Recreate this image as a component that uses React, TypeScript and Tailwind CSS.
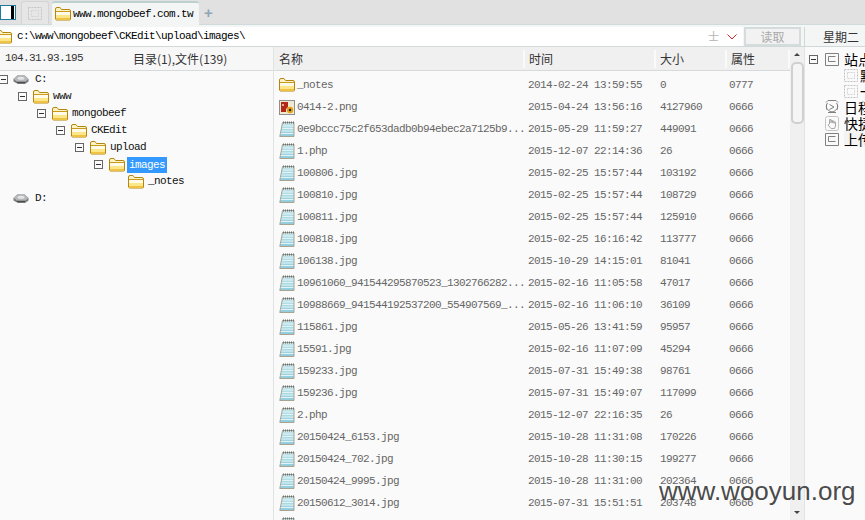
import React from 'react';

const mono = 'font-["Liberation_Mono","Noto_Sans_CJK_SC",monospace] text-[11px] tracking-[-0.6px]';
const cjk = 'font-["Noto_Sans_CJK_SC",sans-serif]';

const FolderIcon: React.FC<{ className?: string }> = ({ className }) => (
  <svg width="16" height="14" viewBox="0 0 16 14" className={`shrink-0 ${className ?? ''}`}>
    <path d="M0.500 12V2a1.500 1.500 0 0 1 1.500-1.500h3l1.500 2h7.500a1.500 1.500 0 0 1 1.500 1.500v8a1 1 0 0 1-1 1h-13a1.500 1.500 0 0 1-1-1.500z" fill="#fdf3c4" stroke="#b5860f" />
    <path d="M1 4.500h14v-0.500" fill="none" stroke="#c99a1e" />
    <path d="M1 5h14v3H1z" fill="#fffbe6" />
    <path d="M1 8h14v3H1z" fill="#fbe689" />
    <path d="M1 11h14v2H1z" fill="#eec345" />
  </svg>
);

const DriveIcon = () => (
  <svg width="16" height="11" viewBox="0 0 16 11" className="shrink-0">
    <path d="M0.500 5 5 1h6l4.500 4v2.500L12 10H5L0.500 7.500z" fill="#77797b" />
    <path d="M0.500 5 5 1h6l4.500 4-3 2.500H4z" fill="#b5b7b9" />
    <ellipse cx="8" cy="4.200" rx="3.500" ry="1.500" fill="#e4e5e6" />
    <path d="M4 8.500h8" stroke="#4a4b4d" />
  </svg>
);

const FileIcon = () => (
  <svg width="16" height="16" viewBox="0 0 16 16" className="shrink-0">
    <defs>
      <linearGradient id="pad" x1="0" y1="0" x2="0" y2="1">
        <stop offset="0" stopColor="#c6e6ec" />
        <stop offset="1" stopColor="#8fcbdc" />
      </linearGradient>
    </defs>
    <path d="M3.500 1.500h11.500v14H0.800z" fill="url(#pad)" stroke="#a8a392" />
    <path d="M3.800 5h10.500M3.200 7.500h11M2.500 10h11.800M1.800 12.500h12.500" stroke="#e2f3f6" />
    <path d="M4.500 0.500v2M6.500 0.500v2M8.500 0.500v2M10.500 0.500v2M12.500 0.500v2M14.500 0.500v2" stroke="#6f6f6f" />
  </svg>
);

const ImageIcon = () => (
  <svg width="16" height="15" viewBox="0 0 16 15" className="shrink-0">
    <rect x="0.500" y="0.500" width="15" height="14" fill="#efe9d2" stroke="#8f8f8f" />
    <path d="M2 2h7v5l-2 2v3H2z" fill="#b3261a" />
    <path d="M3 4h2v2H3z" fill="#e6b090" />
    <circle cx="11" cy="10" r="3.200" fill="#e8a010" />
    <circle cx="11" cy="10" r="1.200" fill="#222" />
  </svg>
);

const Toggle: React.FC<{ className?: string }> = ({ className }) => (
  <span className={`w-[9px] h-[9px] border border-[#666] flex items-center justify-center shrink-0 ${className ?? ''}`}>
    <span className="w-[5px] h-px bg-[#333]" />
  </span>
);

const SiteIcon = () => (
  <svg width="14" height="13" viewBox="0 0 14 13" className="shrink-0">
    <path d="M0.500 0.500h13v12h-13z" fill="none" stroke="#808080" />
    <path d="M10.500 3.500h-7v5h7" fill="none" stroke="#808080" />
  </svg>
);

const DashedIcon = () => (
  <svg width="14" height="13" viewBox="0 0 14 13" className="shrink-0">
    <path d="M0.500 0.500h13v12h-13z" fill="none" stroke="#c4c4c4" strokeDasharray="2 1" />
    <path d="M3.500 3.500h7v6h-7z" fill="none" stroke="#d4d4d4" strokeDasharray="2 1" />
  </svg>
);

const ClockIcon = () => (
  <svg width="14" height="14" viewBox="0 0 14 14" className="shrink-0">
    <path d="M1 2.500 3 0.500h8l2 2M2.500 3a5.500 5.500 0 1 0 9 0" fill="none" stroke="#808080" />
    <path d="M1.500 4.500v5M12.500 4.500v5M3 12.500h8" fill="none" stroke="#808080" />
    <path d="M4.500 4.500 9 7l-4.500 2.500" fill="none" stroke="#808080" />
  </svg>
);

const HandIcon = () => (
  <svg width="14" height="15" viewBox="0 0 14 15" className="shrink-0">
    <rect x="0.500" y="0.500" width="13" height="14" rx="2" fill="none" stroke="#c4c4c4" />
    <path d="M4.500 8V3.500h1.500V7M6 7V4.500h1.500V7M7.500 7V5h1.500v2.500M9 7.500V6h1.500v4L9.500 12.500H6L3 9l1.500-1" fill="none" stroke="#a8a8a8" />
  </svg>
);

const treeRows = [
  { label: 'www', pad: 'pl-[18px]', toggle: true },
  { label: 'mongobeef', pad: 'pl-[37px]', toggle: true },
  { label: 'CKEdit', pad: 'pl-[56px]', toggle: true },
  { label: 'upload', pad: 'pl-[75px]', toggle: true },
  { label: 'images', pad: 'pl-[94px]', toggle: true, active: true },
  { label: '_notes', pad: 'pl-[128px]', toggle: false },
];

const files = [
  ['_notes', '2014-02-24 13:59:55', '0', '0777', 'folder'],
  ['0414-2.png', '2015-04-24 13:56:16', '4127960', '0666', 'image'],
  ['0e9bccc75c2f653dadb0b94ebec2a7125b9...', '2015-05-29 11:59:27', '449091', '0666', 'file'],
  ['1.php', '2015-12-07 22:14:36', '26', '0666', 'file'],
  ['100806.jpg', '2015-02-25 15:57:44', '103192', '0666', 'file'],
  ['100810.jpg', '2015-02-25 15:57:44', '108729', '0666', 'file'],
  ['100811.jpg', '2015-02-25 15:57:44', '125910', '0666', 'file'],
  ['100818.jpg', '2015-02-25 16:16:42', '113777', '0666', 'file'],
  ['106138.jpg', '2015-10-29 14:15:01', '81041', '0666', 'file'],
  ['10961060_941544295870523_1302766282...', '2015-02-16 11:05:58', '47017', '0666', 'file'],
  ['10988669_941544192537200_554907569_...', '2015-02-16 11:06:10', '36109', '0666', 'file'],
  ['115861.jpg', '2015-05-26 13:41:59', '95957', '0666', 'file'],
  ['15591.jpg', '2015-02-16 11:07:09', '45294', '0666', 'file'],
  ['159233.jpg', '2015-07-31 15:49:38', '98761', '0666', 'file'],
  ['159236.jpg', '2015-07-31 15:49:07', '117099', '0666', 'file'],
  ['2.php', '2015-12-07 22:16:35', '26', '0666', 'file'],
  ['20150424_6153.jpg', '2015-10-28 11:31:08', '170226', '0666', 'file'],
  ['20150424_702.jpg', '2015-10-28 11:30:15', '199277', '0666', 'file'],
  ['20150424_9995.jpg', '2015-10-28 11:31:00', '202364', '0666', 'file'],
  ['20150612_3014.jpg', '2015-07-31 15:51:51', '203748', '0666', 'file'],
];

const App: React.FC = () => {
  return (
    <div className="relative w-[865px] h-[520px] overflow-hidden flex flex-col bg-[#fafafa]">
      {/* Tab strip */}
      <div className="h-[27px] shrink-0 bg-[#f4f6f6]">
        <div className="h-[25px] bg-[#e1e1e1] border-b border-[#cfdada] flex items-end">
          <div className="w-[16px] h-[15px] border border-[#1f7a9c] bg-black flex mr-[5px] self-center">
            <span className="w-[10px] h-full bg-white" />
            <span className="w-[3px] h-full bg-black" />
            <span className="w-px h-full bg-white" />
          </div>
          <div className="w-[28px] h-[23px] mr-[3px] bg-[#e6e6e6] border border-b-0 border-[#d4d4d4] rounded-t-[3px] flex items-center justify-center">
            <DashedIcon />
          </div>
          <div className="w-[147px] h-[24px] bg-[#f4f6f6] border-t-2 border-[#bcd0d0] rounded-t-[3px] flex items-center pl-[3px] gap-[2px] translate-y-px">
            <FolderIcon />
            <span className={`${mono} text-black`}>www.mongobeef.com.tw</span>
          </div>
          <span className="ml-[5px] self-center text-[#8ea6b4] text-[15px] font-bold leading-none font-['Liberation_Sans',sans-serif]">+</span>
        </div>
      </div>

      {/* Address bar */}
      <div className="h-[20px] shrink-0 flex items-center bg-[#f4f6f6] border-b border-[#d0d8d8]">
        <div className="w-[747px] h-[19px] bg-white flex items-center -ml-[4px] gap-[5px] shrink-0">
          <FolderIcon />
          <span className={`${mono} text-black flex-1`}>c:\www\mongobeef\CKEdit\upload\images\</span>
          <span className={`text-[#b5b5b5] text-[11px] leading-none ${cjk}`}>士</span>
          <svg width="10" height="6" viewBox="0 0 10 6" className="ml-[3px] mr-[6px]"><path d="M0.500 0.500 5 5l4.500-4.500" fill="none" stroke="#d22" /></svg>
        </div>
        <div className={`ml-[1px] w-[57px] h-[19px] border-2 border-[#d5dcdc] bg-[#f2f2f2] flex items-center justify-center text-[12px] text-[#a9a9a9] ${cjk}`}>读取</div>
        <div className="ml-[3px] w-px h-full bg-[#d0d8d8]" />
        <div className={`pl-[18px] text-[12px] text-[#333] whitespace-nowrap ${cjk}`}>星期二</div>
      </div>

      <div className="flex-1 flex min-h-0">
        {/* Directory tree */}
        <div className="w-[274px] shrink-0 border-r border-[#dfe3e3] flex flex-col">
          <div className="h-[24px] shrink-0 bg-[#f7f7f7] border-b border-[#d6dada] flex items-center text-[12px] text-[#333] pl-[5px]">
            <span className={`w-[128px] ${mono}`}>104.31.93.195</span>
            <span className={cjk}>目录(1),文件(139)</span>
          </div>
          <div className={`${mono} text-[#111]`}>
            <div className="h-[17px] flex items-center -ml-[1px] gap-[5px]">
              <Toggle />
              <DriveIcon />
              <span className="ml-px">C:</span>
            </div>
            {treeRows.map((row) => (
              <div key={row.label} className={`h-[17px] flex items-center ${row.pad}`}>
                {row.toggle && <Toggle className="mr-[6px]" />}
                <FolderIcon className="mr-[3px]" />
                <span className={row.active ? 'bg-[#3399ff] text-white px-[2px] -ml-px h-[16px] leading-[16px]' : 'px-[2px] -ml-px'}>{row.label}</span>
              </div>
            ))}
            <div className="h-[17px] flex items-center pl-[13px] gap-[5px]">
              <DriveIcon />
              <span className="ml-px">D:</span>
            </div>
          </div>
        </div>

        {/* File list */}
        <div className="w-[516px] shrink-0 flex flex-col">
          <div className={`h-[24px] shrink-0 bg-[#f0f0f0] border-b border-[#d6dada] flex items-center text-[12px] text-[#333] ${cjk}`}>
            <span className="w-[251px] pl-[5px] border-r-2 border-[#fafafa]">名称</span>
            <span className="w-[131px] pl-[4px] border-r-2 border-[#fafafa]">时间</span>
            <span className="w-[71px] pl-[4px] border-r-2 border-[#fafafa]">大小</span>
            <span className="w-[63px] pl-[4px] border-r-2 border-[#fafafa]">属性</span>
          </div>
          <div className={`${mono} text-[#666] pt-[3px]`}>
            {files.map(([name, time, size, attr, kind]) => (
              <div key={name} className="h-[22px] flex items-center pl-[5px]">
                <span className="w-[18px] shrink-0 flex">
                  {kind === 'folder' ? <FolderIcon /> : kind === 'image' ? <ImageIcon /> : <FileIcon />}
                </span>
                <span className="w-[231px] shrink-0 whitespace-nowrap">{name}</span>
                <span className="w-[132px] shrink-0">{time}</span>
                <span className="w-[69px] shrink-0">{size}</span>
                <span>{attr}</span>
              </div>
            ))}
            {/* next row is cut by the window */}
            <div className="h-[22px] flex items-center pl-[5px]"><FileIcon /></div>
          </div>
        </div>

        {/* Scrollbar */}
        <div className="w-[14px] shrink-0 bg-[#f0f0f0] flex flex-col items-center">
          <span className="mt-[6px] w-0 h-0 border-x-[3px] border-x-transparent border-b-[3px] border-b-[#444]" />
          <div className="mt-[6px] w-[13px] h-[62px] bg-[#f5f5f5] border-2 border-[#d0d0d0] rounded-[5px]" />
          <span className="mt-auto mb-[6px] w-0 h-0 border-x-[3px] border-x-transparent border-t-[3px] border-t-[#444]" />
        </div>

        {/* Right panel */}
        <div className={`flex-1 min-w-0 border-l border-[#dfe3e3] pt-[4px] pl-[4px] text-[14px] leading-[16px] text-black overflow-hidden whitespace-nowrap ${cjk}`}>
          <div className="h-[16px] flex items-center">
            <Toggle className="mr-[7px]" />
            <SiteIcon />
            <span className="ml-[5px]">站点管理</span>
          </div>
          <div className="h-[16px] pl-[35px] flex items-center gap-[2px]"><DashedIcon /><span>默认</span></div>
          <div className="h-[16px] pl-[35px] flex items-center gap-[2px]"><DashedIcon /><span>一般</span></div>
          <div className="h-[16px] pl-[16px] flex items-center gap-[5px]">
            <ClockIcon />
            <span>日程提醒</span>
          </div>
          <div className="h-[16px] pl-[16px] flex items-center gap-[5px]">
            <HandIcon />
            <span>快捷方式</span>
          </div>
          <div className="h-[16px] pl-[16px] flex items-center gap-[5px]">
            <SiteIcon />
            <span className="bg-[#f3f3f3]">上传文件</span>
          </div>
        </div>
      </div>

      {/* Watermark */}
      <div className="absolute left-[659px] top-[476px] text-[26px] leading-[30px] text-[#333]/90 font-['Liberation_Sans',sans-serif]">www.wooyun.org</div>
    </div>
  );
};

export default App;
